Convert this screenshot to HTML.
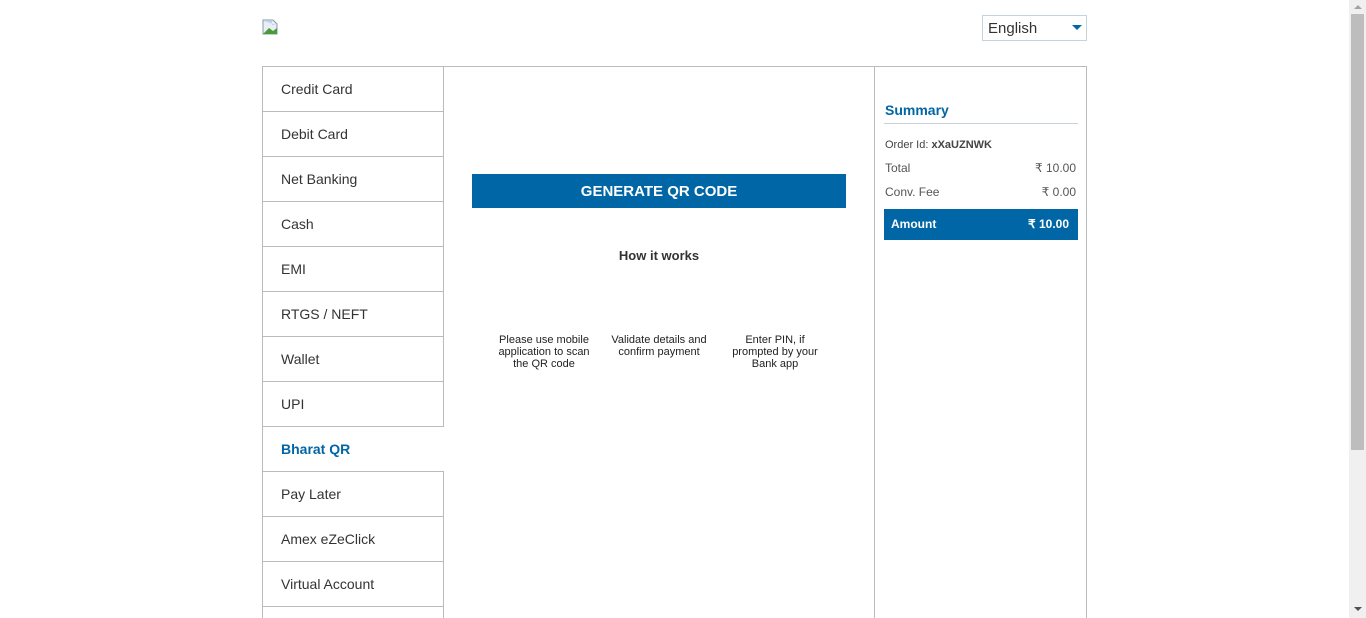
<!DOCTYPE html>
<html style="overflow:hidden;height:618px"><head><meta charset="utf-8"><style>
*{margin:0;padding:0;box-sizing:border-box}
body{width:1366px;height:618px;overflow:hidden;background:#fff;font-family:"Liberation Sans",Arial,sans-serif;color:#333;position:relative}
.abs{position:absolute}
.menu{left:262px;top:66px;width:182px;height:552px;overflow:hidden}
.item{height:45px;border:1px solid #bbb;border-top:none;font-size:14px;padding-left:18px;line-height:44px;color:#333}
.item:first-child{border-top:1px solid #bbb;height:46px;line-height:44px}
.item.act{border-right:none;color:#0066a6;font-weight:bold}
.sb{left:1349px;top:0;width:17px;height:618px;background:#f0f0f0}
</style></head><body>
<svg class="abs" style="left:262px;top:19px" width="16" height="16" viewBox="0 0 16 16"><path d="M1 1h10l4 4v10H1z" fill="#e8eef4" stroke="#8a9aa8"/><path d="M1 15l6-6 4 3 4-3v6z" fill="#4a9a3a"/><path d="M2 2h8v4l4 0" fill="#bcd4ec"/></svg>
<div class="abs" style="left:982px;top:15px;width:105px;height:26px;border:1px solid #c5d3de;font-size:15px;line-height:26px;padding-left:5px;color:#333">English</div>
<div class="abs" style="left:1072px;top:25px;width:0;height:0;border-left:5px solid transparent;border-right:5px solid transparent;border-top:5px solid #0066a6"></div>
<div class="abs" style="left:443px;top:66px;width:644px;height:552px;border-top:1px solid #bbb;border-right:1px solid #bbb"></div>
<div class="abs" style="left:874px;top:66px;width:1px;height:552px;background:#bbb"></div>
<div class="abs menu">
<div class="item">Credit Card</div><div class="item">Debit Card</div><div class="item">Net Banking</div><div class="item">Cash</div><div class="item">EMI</div><div class="item">RTGS / NEFT</div><div class="item">Wallet</div><div class="item">UPI</div><div class="item act">Bharat QR</div><div class="item">Pay Later</div><div class="item">Amex eZeClick</div><div class="item">Virtual Account</div><div class="item"></div>
</div>
<div class="abs" style="left:472px;top:174px;width:374px;height:34px;background:#0066a6;color:#fff;font-weight:bold;font-size:15px;text-align:center;line-height:35px">GENERATE QR CODE</div>
<div class="abs" style="left:472px;top:248px;width:374px;text-align:center;font-weight:bold;font-size:13px;color:#333">How it works</div>
<div class="abs" style="left:494px;top:334px;width:100px;text-align:center;font-size:11px;line-height:12px;color:#222">Please use mobile application to scan the QR code</div>
<div class="abs" style="left:609px;top:334px;width:100px;text-align:center;font-size:11px;line-height:12px;color:#222">Validate details and confirm payment</div>
<div class="abs" style="left:725px;top:334px;width:100px;text-align:center;font-size:11px;line-height:12px;color:#222">Enter PIN, if prompted by your Bank app</div>
<div class="abs" style="left:885px;top:102px;font-size:14px;font-weight:bold;color:#0066a6">Summary</div>
<div class="abs" style="left:884px;top:123px;width:194px;height:1px;background:#c8d0d8"></div>
<div class="abs" style="left:885px;top:139px;font-size:11px;color:#444">Order Id: <b>xXaUZNWK</b></div>
<div class="abs" style="left:885px;top:161px;width:191px;font-size:12px;color:#555">Total<span style="float:right">₹ 10.00</span></div>
<div class="abs" style="left:885px;top:185px;width:191px;font-size:12px;color:#555">Conv. Fee<span style="float:right">₹ 0.00</span></div>
<div class="abs" style="left:884px;top:209px;width:194px;height:31px;background:#0066a6;color:#fff;font-size:12px;font-weight:bold;line-height:30px;padding:0 9px 0 7px">Amount<span style="float:right">₹ 10.00</span></div>
<div class="abs sb"></div>
<div class="abs" style="left:1351px;top:14px;width:13px;height:436px;background:#bdbdbd"></div>
<div class="abs" style="left:1354px;top:5px;border-left:4px solid transparent;border-right:4px solid transparent;border-bottom:4px solid #a3a3a3"></div>
<div class="abs" style="left:1354px;top:607px;border-left:4px solid transparent;border-right:4px solid transparent;border-top:4px solid #505050"></div>
</body></html>
